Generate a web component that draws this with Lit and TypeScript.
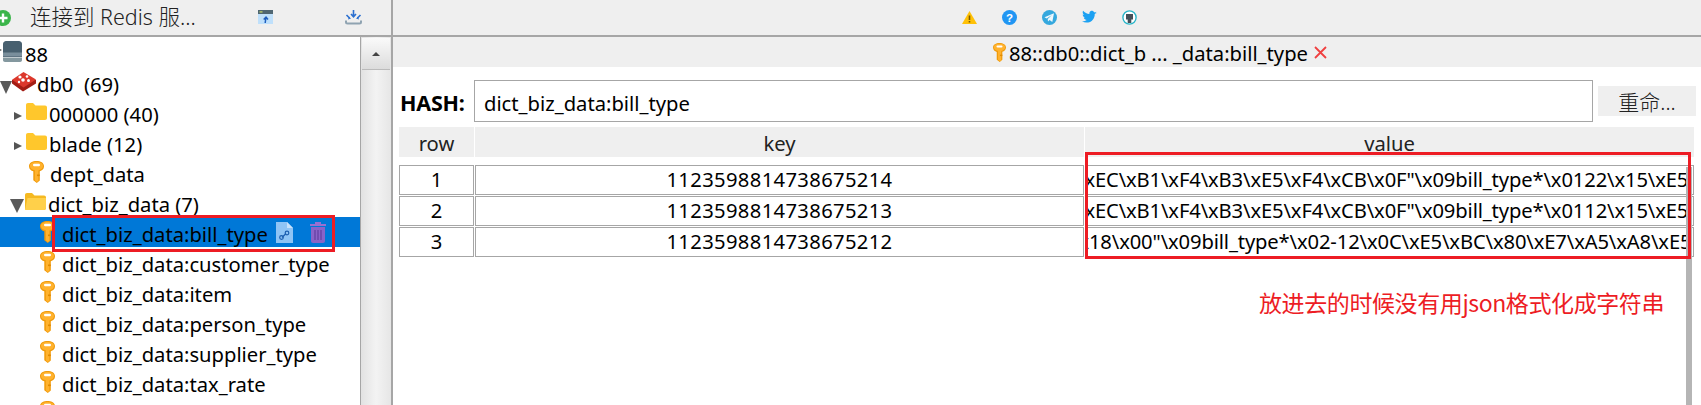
import { LitElement, html, css, svg } from "lit";
import { customElement } from "lit/decorators.js";

const keyShape = svg`<path fill="#f09a0a" d="M7.500 0C11.600 0 15 1.800 15 5.200c0 2.800-1.900 4.400-4.200 5V19.500L7.800 22 4.300 19.300v-9C2 9.600 0 8 0 5.200 0 1.800 3.400 0 7.500 0z"/><path fill="#ffb22e" d="M1 5C1 2 4 1 7.500 1S14 2 14 5c0 2.500-2.400 3.900-4.600 4.400V20l-1.600 1-2-1.700V9.300C3.400 8.800 1 7.500 1 5z"/><rect x="4" y="2.800" width="7" height="2.400" rx="1.200" fill="#fff"/><rect x="8" y="13.500" width="2.800" height="1.600" fill="#e08a00"/>`;
const key = () => html`<svg class="ic key" viewBox="0 0 15 22">${keyShape}</svg>`;
const folder = (open = false) => html`<svg class="ic folder" viewBox="0 0 21 17"><path fill="${open ? "#f5b921" : "#ffc72c"}" d="M0 2C0 .8.800 0 2 0h5l2.500 2.600H19c1.200 0 2 .8 2 2V15c0 1.200-.8 2-2 2H2c-1.200 0-2-.8-2-2z"/>${open ? svg`<path fill="#ffd04a" d="M2.500 5H21v10c0 1.200-.8 2-2 2H0z"/>` : ""}</svg>`;
const arrow = (open: boolean, size = "") => html`<span class="arrow ${open ? "down" : "right"} ${size}"></span>`;

const server = html`<svg class="ic server" viewBox="0 0 19 21"><path fill="#48606f" d="M3 0h13c1.600 0 3 1.400 3 3v9H0V3c0-1.600 1.400-3 3-3z"/><rect y="11.500" width="19" height="4.500" fill="#7a8f9c"/><rect y="15" width="19" height="1" fill="#5f7482"/><path fill="#84989f" d="M0 16.500h19V19c0 1.200-.8 2-2 2H2c-1.200 0-2-.8-2-2z"/></svg>`;
const redis = html`<svg class="ic redis" viewBox="0 0 24 20"><path fill="#a31d14" d="M0 8v3.500l11 8 13-8V8z"/><path fill="#dc382c" d="M11.500 0 24 7.500 11.500 15.500 0 7.800z"/><circle cx="8" cy="5" r="1.600" fill="#fff"/><circle cx="15" cy="4.500" r="1.300" fill="#fff"/><circle cx="11" cy="8" r="1.800" fill="#fff"/><circle cx="16.500" cy="8.500" r="1.500" fill="#fff"/><circle cx="7" cy="10" r="1.200" fill="#fff"/></svg>`;

const treeRows = [
  { name: "88", pad: 0, arrow: arrow(false, "small clip"), icon: server, cls: "srv" },
  { name: "db0  (69)", pad: 0, arrow: arrow(true), icon: redis, cls: "db" },
  { name: "000000 (40)", pad: 14, arrow: arrow(false, "small"), icon: folder(), cls: "fold" },
  { name: "blade (12)", pad: 14, arrow: arrow(false, "small"), icon: folder(), cls: "fold" },
  { name: "dept_data", pad: 29, icon: key(), cls: "keyrow" },
  { name: "dict_biz_data (7)", pad: 10, arrow: arrow(true, "mid"), icon: folder(true), cls: "fold open" },
  { name: "dict_biz_data:bill_type", pad: 40, icon: key(), cls: "leaf selected", tools: true },
  { name: "dict_biz_data:customer_type", pad: 40, icon: key(), cls: "leaf" },
  { name: "dict_biz_data:item", pad: 40, icon: key(), cls: "leaf" },
  { name: "dict_biz_data:person_type", pad: 40, icon: key(), cls: "leaf" },
  { name: "dict_biz_data:supplier_type", pad: 40, icon: key(), cls: "leaf" },
  { name: "dict_biz_data:tax_rate", pad: 40, icon: key(), cls: "leaf" },
  { name: "", pad: 40, icon: key(), cls: "leaf" },
];

const tableRows = [
  { n: 1, k: "1123598814738675214", v: '\\xEC\\xB1\\xF4\\xB3\\xE5\\xF4\\xCB\\x0F"\\x09bill_type*\\x0122\\x15\\xE5', s: "a" },
  { n: 2, k: "1123598814738675213", v: '\\xEC\\xB1\\xF4\\xB3\\xE5\\xF4\\xCB\\x0F"\\x09bill_type*\\x0112\\x15\\xE5', s: "a" },
  { n: 3, k: "1123598814738675212", v: '\\x18\\x00"\\x09bill_type*\\x02-12\\x0C\\xE5\\xBC\\x80\\xE7\\xA5\\xA8\\xE5', s: "b" },
];

@customElement("app-root")
export class AppRoot extends LitElement {
  static styles = css`
    :host { display: block; width: 1701px; height: 405px; overflow: hidden; background: #fff; position: relative;
      font-family: "Noto Sans", "Noto Sans CJK SC", sans-serif; font-size: 20.2px; color: #000; }
    .app { display: grid; grid-template-columns: 393px 1fr; grid-template-rows: 36px 369px; height: 405px; }
    .bar { background: #efefef; border-bottom: 2px solid #a6a6a6; box-sizing: content-box; height: 35px; display: flex; align-items: center; position: relative; }
    .bar.l { border-right: 2px solid #a6a6a6; width: 391px; overflow: hidden; }
    .conn { font-size: 21.5px; margin-left: 11px; width: 228px; color: #222; white-space: pre; line-height: 30px; font-weight: 300; position: relative; top: -1px; }
    .plus { width: 16px; height: 16px; margin-left: -5px; margin-right: 8px; }
    .b1 { width: 15px; height: 15px; }
    .b2 { width: 17px; height: 15px; margin-left: 72px; }
    .bar.r { padding-left: 569px; gap: 25px; }
    .bar.r svg { width: 15px; height: 15px; }
    .left { display: grid; grid-template-columns: 360px 1px 30px 2px; height: 368px; margin-top: 1px; overflow: hidden; }
    .tree { overflow: hidden; }
    .row { height: 30px; display: flex; align-items: center; white-space: pre; position: relative; line-height: 30px; }
    .row .t { position: relative; top: 2px; }
    .ic { flex: none; display: block; }
    .key { width: 15px; height: 22px; }
    .folder { width: 21px; height: 17px; }
    .server { width: 19px; height: 21px; margin-top: -1px; margin-left: 1px; }
    .redis { width: 24px; height: 20px; margin-top: -1px; margin-left: 0; }
    .srv .t { margin-left: 3px; }
    .db .t { margin-left: 1px; }
    .fold .folder { margin-left: 4px; margin-top: -1px; }
    .fold .t { margin-left: 2px; }
    .fold.open .folder { margin-left: 1px; }
    .keyrow .t { margin-left: 6px; }
    .leaf .t { margin-left: 7px; }
    .keyrow .key, .leaf .key { margin-top: -1px; }
    .selected { background: #0078d7; }
    .arrow { display: block; flex: none; width: 0; height: 0; }
    .arrow.down { border-left: 6.500px solid transparent; border-right: 6.500px solid transparent; border-top: 13px solid #5a5a5a; margin-top: 10px; }
    .arrow.down.mid { border-left-width: 7.500px; border-right-width: 7.500px; border-top-width: 14px; margin-top: 7px; }
    .arrow.right { border-top: 4.500px solid transparent; border-bottom: 4.500px solid transparent; border-left: 8px solid #555; margin-top: 7px; }
    .arrow.clip { margin-left: -6px; margin-top: -4px; }
    .tools { display: flex; gap: 17px; margin-left: 8px; align-items: center; margin-top: 0; }
    .tools svg { display: block; }
    .track-b { background: #a6a6a6; }
    .track { background: linear-gradient(90deg, #e2e2e2, #f3f3f3 50%, #e6e6e6); display: flex; flex-direction: column; }
    .btn { height: 31px; margin: 1px 1px 0; background: linear-gradient(#fafafa, #dcdcdc); border-bottom: 1px solid #bbb; display: flex; align-items: center; justify-content: center; }
    .btn i { width: 0; height: 0; border-left: 4px solid transparent; border-right: 4px solid transparent; border-bottom: 4px solid #444; }
    .edge { background: #a6a6a6; }
    .right { display: flex; flex-direction: column; min-width: 0; overflow: hidden; margin-top: 1px; }
    .tabs { height: 30px; background: #efefef; display: flex; align-items: center; padding-left: 600px; flex: none; }
    .tabs .t { margin-left: 3px; white-space: pre; position: relative; top: 1px; }
    .tabs .x { margin-left: 6px; width: 13px; height: 13px; }
    .hash { display: flex; margin: 13px 0 0 7px; height: 42px; align-items: center; flex: none; }
    .hash b { width: 74px; font-weight: 700; font-size: 21.500px; letter-spacing: -0.2px; position: relative; top: 1px; white-space: pre; }
    .input { box-sizing: border-box; width: 1119px; height: 42px; border: 1px solid #a6a6a6; padding: 3px 0 0 9px; line-height: 38px; }
    .rename { margin-left: 5px; width: 98px; height: 30px; background: #efefef; text-align: center; line-height: 32px; color: #222; font-weight: 300; font-size: 21px; }
    .table { margin: 5px 0 0 6px; display: grid; grid-template-columns: 75px 609px 609px; column-gap: 1px; flex: none; width: 1295px; }
    .th { height: 30px; background: #efefef; text-align: center; line-height: 33px; color: #222; margin-bottom: 8px; }
    .td { box-sizing: border-box; height: 30px; border: 1px solid #a6a6a6; margin-bottom: 1px; text-align: center; line-height: 27px; overflow: hidden; white-space: pre; }
    .td.k { letter-spacing: 0.35px; }
    .td.v { text-align: left; }
    .td.v span { display: inline-block; letter-spacing: -0.13px; }
    .td.v .a { margin-left: -9px; }
    .td.v .b { margin-left: -15px; }
    .vscroll { position: absolute; left: 1686px; top: 167px; width: 6px; height: 238px; background: #b5b5b5; }
    .mark { position: absolute; box-sizing: border-box; border: 3px solid #ed1c24; pointer-events: none; }
    .m1 { left: 52px; top: 215px; width: 283px; height: 37px; }
    .m2 { left: 1085px; top: 152px; width: 606px; height: 107px; }
    .note { position: absolute; left: 1259px; top: 287px; font-size: 23px; line-height: 30px; color: #ed1c24; white-space: pre; font-family: "Noto Sans CJK SC", "Noto Sans", sans-serif; letter-spacing: -0.4px; }
  `;

  private renderRow(r: any) {
    return html`<div class="row ${r.cls}" style="padding-left:${r.pad}px">
      ${r.arrow ?? ""}${r.icon}<span class="t">${r.name}</span>
      ${r.tools ? html`<span class="tools">
        <svg width="17" height="21" viewBox="0 0 17 21"><path fill="#8fc4f5" d="M0 0h11l6 6v15H0z"/><path fill="#c7e2fb" d="M11 0l6 6h-6z"/><path fill="none" stroke="#1d5fb0" stroke-width="1.300" d="M6 15.500l4-4"/><circle cx="5.500" cy="15.500" r="1.800" fill="none" stroke="#1d5fb0" stroke-width="1.200"/><circle cx="11" cy="11" r="1.800" fill="none" stroke="#1d5fb0" stroke-width="1.200"/></svg>
        <svg width="16" height="21" viewBox="0 0 16 21"><rect x="0" y="2" width="16" height="2" fill="#9a6fd0"/><rect x="5" y="0" width="6" height="2" fill="#9a6fd0"/><path fill="#8a63c8" d="M1 5h14v14c0 1.200-.8 2-2 2H3c-1.200 0-2-.8-2-2z"/><path stroke="#6a46a8" stroke-width="1.500" d="M5 8v10M8 8v10M11 8v10"/></svg>
      </span>` : ""}
    </div>`;
  }

  render() {
    return html`
      <div class="app">
        <div class="bar l">
          <svg class="plus" viewBox="0 0 16 16"><circle cx="8" cy="8" r="8" fill="#3bb54a"/><path stroke="#fff" stroke-width="2.400" d="M8 3.500v9M3.500 8h9"/></svg>
          <span class="conn">连接到 Redis 服...</span>
          <svg class="b1" viewBox="0 0 15 15"><rect width="15" height="14" y="0" fill="#bfe0fb"/><rect width="15" height="4" fill="#4f6672"/><rect x="1.500" y="1.200" width="3" height="1.400" fill="#b9c96a"/><path fill="none" stroke="#1f5fbf" stroke-width="1.500" d="M7.200 13l.6-5M5.700 9.500l2.300-2.300 2 2.300"/></svg>
          <svg class="b2" viewBox="0 0 17 15"><path fill="none" stroke="#2a6fd0" stroke-width="1.600" d="M8.500 0v6M6 4l2.500 2.700L11 4M1.500 5l3 3M15.500 5l-3 3"/><path fill="#2a6fd0" d="M3 9.500l3-1-2-1.800zM14 9.500l-3-1 2-1.800z"/><path fill="none" stroke="#8fa3b1" stroke-width="2" d="M1 10.500v1.500c0 1 .6 1.500 1.500 1.500h12c.9 0 1.500-.5 1.500-1.500v-1.500"/></svg>
        </div>
        <div class="bar r">
          <svg viewBox="0 0 15 15"><path fill="#ffc107" d="M7.500 1 15 14H0z"/><path stroke="#7a5a00" stroke-width="1.600" d="M7.500 5.500v4.500M7.500 11v1.500"/></svg>
          <svg viewBox="0 0 15 15"><circle cx="7.500" cy="7.500" r="7.500" fill="#2196f3"/><text x="7.500" y="11.700" text-anchor="middle" font-size="11.500" font-weight="700" fill="#fff" font-family="Liberation Sans">?</text></svg>
          <svg viewBox="0 0 15 15"><circle cx="7.500" cy="7.500" r="7.500" fill="#35a8de"/><path fill="#eef8fd" d="M2.500 7.300 12 3.300 10.300 12 7.600 10 6 11.500 5.700 9 10 5 4.700 8.500z"/></svg>
          <svg viewBox="0 0 15 15"><path fill="#1da1f2" d="M15 2.900c-.6.300-1.200.4-1.800.5.600-.4 1.100-1 1.300-1.700-.6.300-1.200.6-1.900.7C11.200.700 9.900.400 8.800 1 7.700 1.600 7.200 2.800 7.400 4 5 3.900 2.700 2.700 1.100.8.300 2.200.7 4 2.100 4.900c-.5 0-1-.1-1.400-.4 0 1.500 1 2.800 2.500 3.100-.5.100-.9.200-1.400.1.400 1.300 1.600 2.100 2.900 2.200C3.500 11 1.700 11.500 0 11.300c3.600 2.300 8.400 1.500 11-1.900 1.200-1.600 1.900-3.600 1.700-5.500.9-.3 1.700-.9 2.300-1z"/></svg>
          <svg viewBox="0 0 15 15"><circle cx="7.500" cy="7.500" r="6.600" fill="#fff" stroke="#29b6c9" stroke-width="1.400"/><path fill="#444f58" d="M4 4h7v5.500H9.300V13H5.700V9.500H4z"/></svg>
        </div>
        <div class="left">
          <div class="tree">${treeRows.map((r) => this.renderRow(r))}</div>
          <div class="track-b"></div>
          <div class="track"><div class="btn"><i></i></div></div>
          <div class="edge"></div>
        </div>
        <div class="right">
          <div class="tabs">
            <svg class="ic" style="width:13px;height:19px" viewBox="0 0 15 22">${keyShape}</svg>
            <span class="t">88::db0::dict_b ... _data:bill_type</span>
            <svg class="x" viewBox="0 0 13 13"><path stroke="#f04040" stroke-width="1.800" d="M1 1l11 11M12 1L1 12"/></svg>
          </div>
          <div class="hash"><b>HASH:</b><div class="input">dict_biz_data:bill_type</div><div class="rename">重命...</div></div>
          <div class="table">
            <div class="th">row</div><div class="th">key</div><div class="th">value</div>
            ${tableRows.map((r) => html`<div class="td">${r.n}</div><div class="td k">${r.k}</div><div class="td v"><span class="${r.s}">${r.v}</span></div>`)}
          </div>
        </div>
      </div>
      <div class="vscroll"></div>
      <div class="mark m1"></div>
      <div class="mark m2"></div>
      <div class="note">放进去的时候没有用json格式化成字符串</div>
    `;
  }
}
